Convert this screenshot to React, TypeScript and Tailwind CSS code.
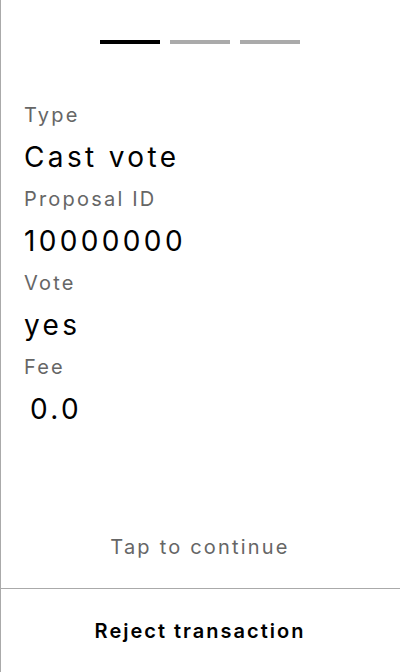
const fields: { label: string; value: string; indent?: boolean }[] = [
  { label: 'Type', value: 'Cast vote' },
  { label: 'Proposal ID', value: '10000000' },
  { label: 'Vote', value: 'yes' },
  { label: 'Fee', value: '0.0', indent: true },
]

function Steps({ current, total }: { current: number; total: number }) {
  return (
    <div className="flex justify-center gap-[10px] pt-10">
      {Array.from({ length: total }).map((_, i) => (
        <div
          key={i}
          className={i === current ? 'h-1 w-[60px] bg-black' : 'h-1 w-[60px] bg-[#aaaaaa]'}
        />
      ))}
    </div>
  )
}

export default function App() {
  return (
    <div className="flex h-[672px] flex-col bg-white font-['Inter',sans-serif] text-black shadow-[inset_1px_0_0_#aaaaaa]">
      <div className="flex flex-1 flex-col">
        <Steps current={0} total={3} />

        <dl className="mt-[57px] px-6">
          {fields.map((f) => (
            <div key={f.label}>
              <dt className="text-[20px] leading-[28px] tracking-[0.11em] text-[#666666]">
                {f.label}
              </dt>
              <dd
                className={
                  f.indent
                    ? 'pl-[6px] text-[28px] leading-[56px] tracking-[0.12em]'
                    : 'text-[28px] leading-[56px] tracking-[0.12em]'
                }
              >
                {f.value}
              </dd>
            </div>
          ))}
        </dl>

        <p className="mt-auto pb-[27px] text-center text-[20px] leading-[28px] tracking-[0.11em] text-[#666666]">
          Tap to continue
        </p>
      </div>

      <button
        type="button"
        className="h-[84px] border-t border-[#aaaaaa] text-center text-[20px] font-semibold tracking-[0.1em]"
      >
        Reject transaction
      </button>
    </div>
  )
}
